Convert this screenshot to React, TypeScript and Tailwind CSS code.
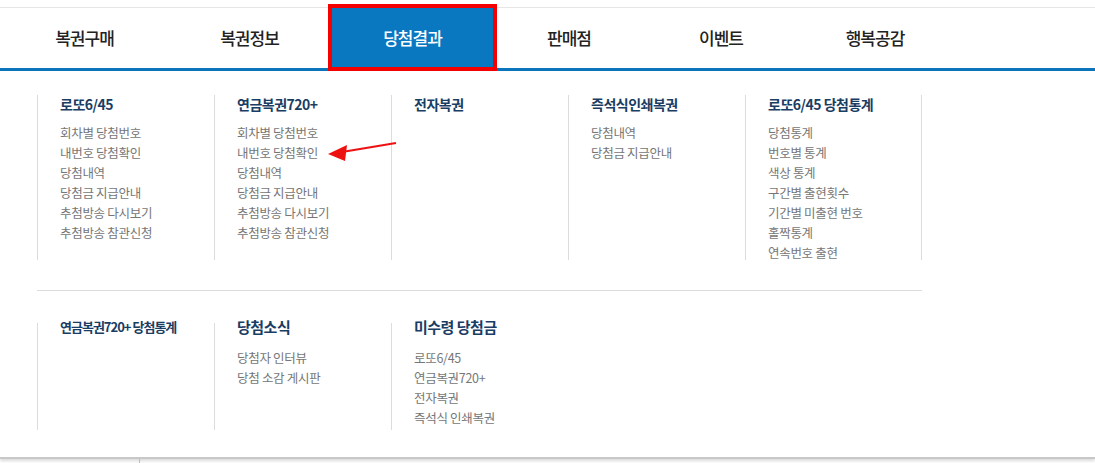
type Col = { title: string; items: string[]; small?: boolean; big?: boolean }

const navItems = [
  { label: '복권구매', w: 'w-[165px]' },
  { label: '복권정보', w: 'w-[165px]' },
  { label: '당첨결과', w: 'w-[161px]', active: true },
  { label: '판매점', w: 'w-[152px]' },
  { label: '이벤트', w: 'w-[152px]' },
  { label: '행복공감', w: 'w-[156px]' },
]

const row1: Col[] = [
  { title: '로또6/45', items: ['회차별 당첨번호', '내번호 당첨확인', '당첨내역', '당첨금 지급안내', '추첨방송 다시보기', '추첨방송 참관신청'] },
  { title: '연금복권720+', items: ['회차별 당첨번호', '내번호 당첨확인', '당첨내역', '당첨금 지급안내', '추첨방송 다시보기', '추첨방송 참관신청'] },
  { title: '전자복권', items: [] },
  { title: '즉석식인쇄복권', items: ['당첨내역', '당첨금 지급안내'] },
  { title: '로또6/45 당첨통계', items: ['당첨통계', '번호별 통계', '색상 통계', '구간별 출현횟수', '기간별 미출현 번호', '홀짝통계', '연속번호 출현'] },
]

const row2: Col[] = [
  { title: '연금복권720+ 당첨통계', items: [], small: true },
  { title: '당첨소식', items: ['당첨자 인터뷰', '당첨 소감 게시판'], big: true },
  { title: '미수령 당첨금', items: ['로또6/45', '연금복권720+', '전자복권', '즉석식 인쇄복권'], big: true },
]

function MenuColumn({ col, h, head, gap, last }: { col: Col; h: string; head: string; gap: string; last?: boolean }) {
  const size = col.small
    ? 'text-[13px] tracking-[-1px]'
    : col.big
      ? 'text-[15px] tracking-[-0.5px]'
      : 'text-[14px] tracking-[-0.5px]'
  return (
    <div className={`w-[177px] ${h} border-l border-[#dcdcdc] pl-[22px] ${last ? 'border-r' : ''}`}>
      <h3 className={`${head} ${size} font-bold leading-[18px] text-[#1a3d63]`}>{col.title}</h3>
      <ul className={`${gap} flex flex-col`}>
        {col.items.map((it) => (
          <li key={it} className="text-[12.5px] leading-[20px] tracking-[-0.3px] text-[#767676]">
            {it}
          </li>
        ))}
      </ul>
    </div>
  )
}

export default function App() {
  return (
    <div
      className="relative w-[1095px] h-[463px] overflow-hidden bg-white"
      style={{ fontFamily: '"Noto Sans CJK KR", "Noto Sans", sans-serif' }}
    >
      <div className="h-[8px] border-b border-[#e6e6e6]" />
      <nav className="flex h-[63px] border-b-[3px] border-[#0a74bd] pl-[2px]">
        {navItems.map((n) => (
          <div
            key={n.label}
            className={`${n.w} flex items-center justify-center text-[17px] tracking-[-1px] font-medium ${
              n.active ? 'relative bg-[#0a77c1] text-white' : 'text-[#222]'
            }`}
          >
            {n.label}
            {n.active && (
              <span className="absolute left-[-4px] right-[-4px] top-[-4px] bottom-[-3px] border-[4px] border-[#f40000]" />
            )}
          </div>
        ))}
      </nav>

      <div className="h-[388px] border-b-2 border-[#c8c8c8] shadow-[0_2px_3px_rgba(0,0,0,0.15)] pl-[37px] pt-[24px]">
        <div className="flex">
          {row1.map((c, i) => (
            <MenuColumn key={c.title} col={c} h="h-[165px]" head="" gap="mt-[10px]" last={i === row1.length - 1} />
          ))}
        </div>
        <div className="mt-[30px] w-[885px] border-t border-[#dcdcdc]" />
        <div className="mt-[32px] flex">
          {row2.map((c) => (
            <MenuColumn key={c.title} col={c} h="h-[107px]" head="-mt-[5px]" gap="mt-[12px]" />
          ))}
        </div>
      </div>
      <div className="absolute left-[139px] top-[459px] h-[4px] w-px bg-[#bbb]" />

      <svg className="absolute left-[324px] top-[138px]" width="76" height="26" viewBox="0 0 76 26">
        <line x1="72" y1="5" x2="18" y2="14" stroke="#ee1111" strokeWidth="2" />
        <polygon points="4,16 23,7 21,23" fill="#ee1111" />
      </svg>
    </div>
  )
}
